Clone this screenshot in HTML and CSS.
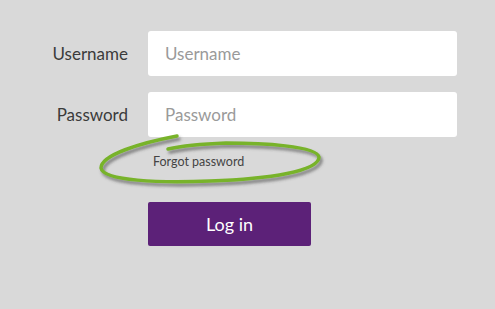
FILE: index.html
```html
<!DOCTYPE html>
<html lang="en">
<head>
    <meta charset="UTF-8">
    <meta name="viewport" content="width=device-width, initial-scale=1.0">
    <title>Log in</title>
    <link rel="stylesheet" href="styles.css">
</head>

<body>
    <main class="login">
        <form class="login-form">
            <!-- Username -->
            <label class="field-label" for="username">Username</label>
            <input class="field-input" id="username" type="text" placeholder="Username">

            <!-- Password -->
            <label class="field-label" for="password">Password</label>
            <input class="field-input" id="password" type="password" placeholder="Password">

            <!-- Forgot link, circled by hand -->
            <div class="forgot">
                <a href="#" class="forgot-link">Forgot password</a>
                <svg class="scribble" width="240" height="60" viewBox="90 130 240 60">
                    <defs>
                        <filter id="shade" x="-10%" y="-30%" width="130%" height="180%">
                            <feDropShadow dx="2" dy="3" stdDeviation="1.8" flood-color="#444" flood-opacity="0.6"/>
                        </filter>
                    </defs>
                    <path d="M177,136 C140,143 101,155 101,168 C103,181 160,183 210,181 C270,179 319,171 319,157 C317,146 262,143 226,143 C200,144 181,146 168,149"
                          fill="none" stroke="#78b32a" stroke-width="3.5" stroke-linecap="round" filter="url(#shade)"/>
                </svg>
            </div>

            <button type="submit" class="login-btn">Log in</button>
        </form>
    </main>
</body>
</html>
```

FILE: styles.css
```css
body {
    background-color: #d9d9d9;
    font-family: Lato, "Open Sans", sans-serif;
    margin: 0;
    padding: 0;
}

.login {
    padding-top: 31px;
}

.login-form {
    display: grid;
    grid-template-columns: 128px 309px;
    column-gap: 20px;
    row-gap: 16px;
    align-items: center;
}

.field-label {
    text-align: right;
    font-size: 17px;
    color: #3b3b3b;
}

.field-input {
    height: 45px;
    box-sizing: border-box;
    border: none;
    border-radius: 3px;
    background-color: #fff;
    padding: 0 17px;
    font-family: inherit;
    font-size: 17px;
    color: #333;
}

.field-input::placeholder {
    color: #9a9a9a;
}

.forgot {
    grid-column: 2;
    position: relative;
    height: 32px;
    margin-top: -8px;
    display: flex;
    align-items: center;
}

.forgot-link {
    padding-left: 5px;
    font-size: 12.5px;
    color: #444;
    text-decoration: none;
}

.scribble {
    position: absolute;
    left: -58px;
    top: -15px;
    pointer-events: none;
}

.login-btn {
    grid-column: 2;
    width: 163px;
    height: 44px;
    margin-top: 9px;
    border: none;
    border-radius: 2px;
    background-color: #5c2178;
    color: #fff;
    font-family: inherit;
    font-size: 18px;
    cursor: pointer;
}
```
